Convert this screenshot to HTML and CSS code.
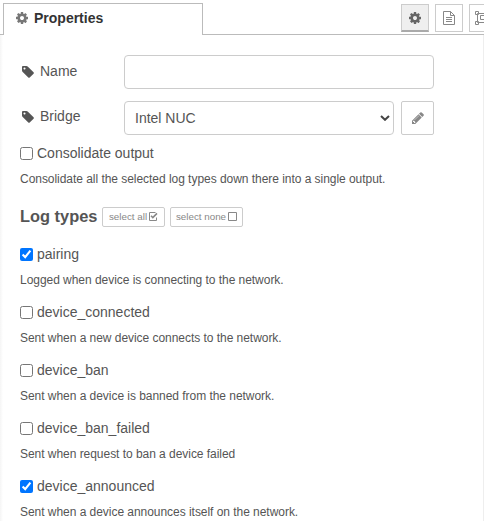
FILE: index.html
```html
<!DOCTYPE html>
<html lang="en">
<head>
<meta charset="utf-8">
<title>Properties</title>
<link rel="stylesheet" href="styles.css">
</head>
<body>
<svg class="defs" aria-hidden="true">
<symbol id="cog" viewBox="0 0 1792 1792"><path d="M1152 896q0-106-75-181t-181-75-181 75-75 181 75 181 181 75 181-75 75-181zm512-109v222q0 12-8 23t-20 13l-185 28q-19 54-39 91 35 50 107 138 10 12 10 25t-9 23q-27 37-99 108t-94 71q-12 0-26-9l-138-108q-44 23-91 38-16 136-29 186-7 28-36 28h-222q-14 0-24.5-8.5t-11.5-21.5l-28-184q-49-16-90-37l-141 107q-10 9-25 9-14 0-25-11-126-114-165-168-7-10-7-23 0-12 8-23 15-21 51-66.5t54-70.5q-27-50-41-99l-183-27q-13-2-21-12.5t-8-23.5v-222q0-12 8-23t19-13l186-28q14-46 39-92-40-57-107-138-10-12-10-24 0-10 9-23 26-36 98.5-107.5t94.5-71.5q13 0 26 10l138 107q44-23 91-38 16-136 29-186 7-28 36-28h222q14 0 24.5 8.5t11.5 21.5l28 184q49 16 90 37l142-107q9-9 24-9 13 0 25 10 129 119 165 170 7 8 7 22 0 12-8 23-15 21-51 66.5t-54 70.5q26 50 41 98l183 28q13 2 21 12.5t8 23.5z"/></symbol>
<symbol id="tag" viewBox="0 0 1792 1792"><path d="M576 576q0-53-37.5-90.5t-90.5-37.5-90.5 37.5-37.5 90.5 37.5 90.5 90.5 37.5 90.5-37.5 37.5-90.5zm1067 576q0 53-37 90l-491 492q-39 37-91 37-53 0-90-37l-715-716q-38-37-64.5-101t-26.5-117v-416q0-52 38-90t90-38h416q53 0 117 26.5t102 64.5l715 714q37 39 37 91z"/></symbol>
<symbol id="pencil" viewBox="0 0 1792 1792"><path d="M491 1536l91-91-235-235-91 91v107h128v128h107zm523-928q0-22-22-22-10 0-17 7l-542 542q-7 7-7 17 0 22 22 22 10 0 17-7l542-542q7-7 7-17zm-54-192l416 416-832 832h-416v-416zm683 96q0 53-37 90l-166 166-416-416 166-165q36-38 90-38 53 0 91 38l235 234q37 39 37 91z"/></symbol>
</svg>
<div class="panel">
  <header class="tabs">
    <div class="tab"><svg class="icon"><use href="#cog"/></svg><span>Properties</span></div>
    <div class="tools">
      <button class="tool selected" aria-label="Properties"><svg class="icon"><use href="#cog"/></svg></button>
      <button class="tool" aria-label="Description"><svg class="line-icon" viewBox="0 0 14 14"><path d="M1.5.5H8.5L12.5 4.5V13.5H1.5ZM8.5.5V4.5H12.5M4 6.5H10M4 8.5H10M4 10.5H10"/></svg></button>
      <button class="tool" aria-label="Appearance"><svg class="line-icon wide" viewBox="0 0 16 14"><path d="M2.5 2.5H13.5V11.5H2.5ZM.5.5H3.5V3.5H.5ZM12.5.5H15.5V3.5H12.5ZM.5 10.5H3.5V13.5H.5ZM12.5 10.5H15.5V13.5H12.5ZM5.5 4.5H9.5V8.5H5.5Z"/></svg></button>
    </div>
  </header>
  <main class="form">
    <div class="row"><label for="name"><svg class="icon"><use href="#tag"/></svg>Name</label><input class="field" id="name" type="text"></div>
    <div class="row bridge"><label for="bridge"><svg class="icon"><use href="#tag"/></svg>Bridge</label>
      <div class="field select" id="bridge"><span>Intel NUC</span><svg class="chevron" viewBox="0 0 10 6"><path d="M1 1L5 4.8L9 1"/></svg></div>
      <button class="edit" aria-label="Edit"><svg class="icon"><use href="#pencil"/></svg></button>
    </div>
    <section class="option first"><label><input type="checkbox"><span>Consolidate output</span></label><p>Consolidate all the selected log types down there into a single output.</p></section>
    <div class="heading"><h4>Log types</h4>
      <button class="small">select all<svg viewBox="0 0 10 9"><path d="M7.5 .5H1.5V8.5H8.5V5.5"/><path class="tick" d="M3 3.8L4.8 5.6L9 1.4"/></svg></button>
      <button class="small">select none<svg viewBox="0 0 10 9"><path d="M1.5 .5H9.5V8.5H1.5Z"/></svg></button>
    </div>
    <section class="option"><label><input type="checkbox" checked><span>pairing</span></label><p>Logged when device is connecting to the network.</p></section>
    <section class="option"><label><input type="checkbox"><span>device_connected</span></label><p>Sent when a new device connects to the network.</p></section>
    <section class="option"><label><input type="checkbox"><span>device_ban</span></label><p>Sent when a device is banned from the network.</p></section>
    <section class="option"><label><input type="checkbox"><span>device_ban_failed</span></label><p>Sent when request to ban a device failed</p></section>
    <section class="option"><label><input type="checkbox" checked><span>device_announced</span></label><p>Sent when a device announces itself on the network.</p></section>
  </main>
</div>
</body>
</html>
```
FILE: styles.css
```css
* { box-sizing: border-box; }
body { margin: 0; height: 521px; overflow: hidden; background: #fff; color: #555; font: 14px/20px "Liberation Sans", Arial, sans-serif; }
button { padding: 0; border: 1px solid #ccc; background: #fff; color: #888; font-family: inherit; }
.defs { display: none; }
.icon { width: 14px; height: 14px; fill: currentColor; flex: none; }
.panel { height: 521px; overflow: hidden; }
.tabs { display: flex; height: 35px; padding: 3px 0 0 3px; background: linear-gradient(#bbb, #bbb) 0 34px / 100% 1px no-repeat; }
.tab { display: flex; flex: none; align-items: center; width: 200px; height: 32px; padding: 0 0 3px 11px; gap: 5px; border: 1px solid #bbb; border-bottom: 0; background: #fff; color: #333; font-weight: bold; }
.tab .icon { color: #777; }
.tools { display: flex; flex: none; gap: 6px; margin-left: 198px; padding-top: 1px; }
.tool { display: flex; align-items: center; justify-content: center; flex: none; width: 28px; height: 28px; color: #888; }
.selected { background: #efefef; border-bottom: 2px solid #aaa; color: #666; }
.line-icon { width: 14px; height: 14px; fill: none; stroke: currentColor; }
.wide { width: 16px; }
.form { height: 486px; padding: 20px 20px 0; border-right: 1px solid #eee; background: linear-gradient(90deg, #f5f5f5, #fff) 0 0 / 3px 100% no-repeat; }
.row { display: flex; height: 34px; margin-bottom: 12px; }
.row label { display: flex; width: 104px; height: 32px; align-items: center; gap: 5px; padding-left: 1px; }
.bridge label { height: 30px; }
.field { width: 310px; height: 34px; border: 1px solid #ccc; border-radius: 4px; background: #fff; }
.select { display: flex; align-items: center; justify-content: space-between; width: 270px; padding: 0 3px 0 10px; }
.chevron { width: 10px; height: 6px; fill: none; stroke: #444; stroke-width: 2; }
.edit { display: flex; align-items: center; justify-content: center; width: 33px; height: 34px; margin-left: 7px; border-radius: 2px; }
.option { height: 58px; }
.option label { display: flex; align-items: center; height: 20px; gap: 4px; }
.option input { width: 13px; height: 13px; margin: 0; flex: none; }
.option p { margin: 6px 0 0; font-size: 12px; line-height: 20px; letter-spacing: -0.04px; }
.option.first { margin-top: -4px; }
.heading { display: flex; align-items: center; height: 22px; margin: 5px 0 16px; }
h4 { width: 82px; margin: 0; padding-bottom: 3px; font-size: 16.4px; line-height: 20px; white-space: nowrap; }
.small { display: flex; align-items: center; justify-content: center; width: 63px; height: 20px; margin-right: 5px; padding-bottom: 1px; gap: 1px; border-radius: 2px; font-size: 9.8px; white-space: nowrap; }
.small + .small { width: 73px; }
.small svg { width: 10px; height: 9px; flex: none; fill: none; stroke: currentColor; }
.small .tick { stroke-width: 1.6; }
```
